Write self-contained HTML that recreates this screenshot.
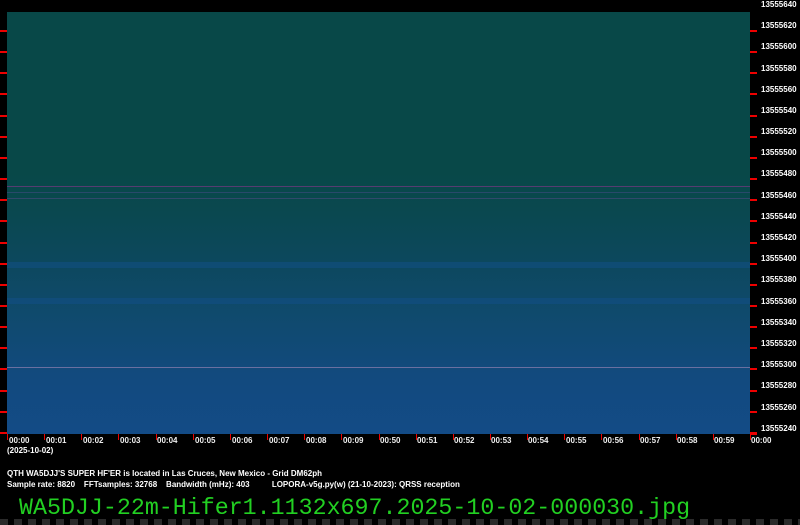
<!DOCTYPE html>
<html><head><meta charset="utf-8"><style>
body{margin:0;width:800px;height:525px;background:#000;position:relative;overflow:hidden;font-family:"Liberation Sans",sans-serif;}
.sp{position:absolute;left:7px;top:12px;width:743px;height:422px;
background:linear-gradient(to bottom,#084848 0%,#084848 38%,#0a4850 48%,#0c485c 58%,#0e4966 66%,#104a72 76%,#124a7e 86%,#134b86 100%);}
.r{position:absolute;left:761px;color:#fff;font-size:8px;font-weight:bold;}
.tk{position:absolute;background:#e00;}
.t{position:absolute;top:436px;color:#eee;font-size:8px;font-weight:bold;}
.i{position:absolute;left:7px;color:#fff;font-size:8px;font-weight:bold;white-space:pre;}
.fn{position:absolute;left:19px;top:495px;color:#22d022;font-family:"Liberation Mono",monospace;font-size:23.3px;}
.ck{position:absolute;left:0;top:519px;width:800px;height:6px;background:repeating-linear-gradient(to right,#2a2a2a 0 8px,#000 8px 14px);}
</style></head><body>
<div class="sp">
<div style="position:absolute;left:0;right:0;top:174px;height:1px;background:#6a3a7a;opacity:.8"></div>
<div style="position:absolute;left:0;right:0;top:180px;height:1px;background:#4a4a8a;opacity:.5"></div>
<div style="position:absolute;left:0;right:0;top:186px;height:1px;background:#5a4a8a;opacity:.5"></div>
<div style="position:absolute;left:0;right:0;top:250px;height:6px;background:#12508a;opacity:.5"></div>
<div style="position:absolute;left:0;right:0;top:286px;height:6px;background:#12508a;opacity:.5"></div>
<div style="position:absolute;left:0;right:0;top:355px;height:1px;background:#6a70a0"></div>
</div>
<div class="r" style="top:0px">13555640</div>
<div class="r" style="top:21px">13555620</div>
<div class="r" style="top:42px">13555600</div>
<div class="r" style="top:64px">13555580</div>
<div class="r" style="top:85px">13555560</div>
<div class="r" style="top:106px">13555540</div>
<div class="r" style="top:127px">13555520</div>
<div class="r" style="top:148px">13555500</div>
<div class="r" style="top:169px">13555480</div>
<div class="r" style="top:191px">13555460</div>
<div class="r" style="top:212px">13555440</div>
<div class="r" style="top:233px">13555420</div>
<div class="r" style="top:254px">13555400</div>
<div class="r" style="top:275px">13555380</div>
<div class="r" style="top:297px">13555360</div>
<div class="r" style="top:318px">13555340</div>
<div class="r" style="top:339px">13555320</div>
<div class="r" style="top:360px">13555300</div>
<div class="r" style="top:381px">13555280</div>
<div class="r" style="top:403px">13555260</div>
<div class="r" style="top:424px">13555240</div>
<div id="ticks"></div>
<div class="t" style="left:9px">00:00</div><div class="t" style="left:46px">00:01</div><div class="t" style="left:83px">00:02</div><div class="t" style="left:120px">00:03</div><div class="t" style="left:157px">00:04</div><div class="t" style="left:195px">00:05</div><div class="t" style="left:232px">00:06</div><div class="t" style="left:269px">00:07</div><div class="t" style="left:306px">00:08</div><div class="t" style="left:343px">00:09</div><div class="t" style="left:380px">00:50</div><div class="t" style="left:417px">00:51</div><div class="t" style="left:454px">00:52</div><div class="t" style="left:491px">00:53</div><div class="t" style="left:528px">00:54</div><div class="t" style="left:566px">00:55</div><div class="t" style="left:603px">00:56</div><div class="t" style="left:640px">00:57</div><div class="t" style="left:677px">00:58</div><div class="t" style="left:714px">00:59</div><div class="t" style="left:751px">00:00</div>
<div class="i" style="top:446px">(2025-10-02)</div>
<div class="i" style="top:469px">QTH WA5DJJ'S SUPER HF'ER is located in Las Cruces, New Mexico - Grid DM62ph</div>
<div class="i" style="top:480px">Sample rate: 8820    FFTsamples: 32768    Bandwidth (mHz): 403          LOPORA-v5g.py(w) (21-10-2023): QRSS reception</div>
<div class="fn">WA5DJJ-22m-Hifer1.1132x697.2025-10-02-000030.jpg</div>
<div class="ck"></div>
<script>
var h='';
for(var i=0;i<20;i++){var y=30+i*21.15;h+='<div class="tk" style="left:0;top:'+Math.round(y)+'px;width:7px;height:2px"></div><div class="tk" style="left:750px;top:'+Math.round(y)+'px;width:7px;height:2px"></div>';}
h+='<div class="tk" style="left:750px;top:433px;width:7px;height:2px"></div>';
for(var j=0;j<=20;j++){var x=7+j*37.15;h+='<div class="tk" style="left:'+Math.round(x)+'px;top:434px;width:1px;height:6px"></div>';}
document.getElementById('ticks').innerHTML=h;
</script>
</body></html>
